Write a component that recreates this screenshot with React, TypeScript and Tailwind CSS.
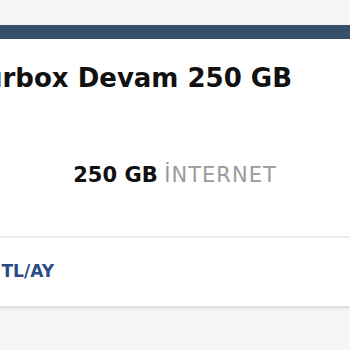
export default function App() {
  return (
    <div className="h-[350px] w-[350px] overflow-hidden bg-[#f4f5f7] pt-[25px] font-['DejaVu_Sans',sans-serif]">
      <div className="flex w-full flex-col bg-white shadow-[0_2px_3px_rgba(0,0,0,0.12)]">
        <div className="h-[14px] bg-[#36506b]" />
        <div className="flex h-[197px] flex-col">
          <div className="mt-[23px] flex w-[292px] justify-end">
            <h2 className="whitespace-nowrap text-[26px] font-bold leading-[32px] text-[#111]">
              Turbox Devam 250 GB
            </h2>
          </div>
          <p className="mt-[68px] text-center text-[21px] leading-[26px] text-[#111]">
            <span className="font-bold">250 GB</span>{" "}
            <span className="font-normal tracking-[1px] text-[#9a9a9c]">İNTERNET</span>
          </p>
        </div>
        <div className="h-[2px] bg-[#ececec]" />
        <div className="flex h-[68px] items-center">
          <div className="flex w-[54px] justify-end">
            <span className="whitespace-nowrap text-[17px] font-bold text-[#2b4a86]">
              99,9 TL/AY
            </span>
          </div>
        </div>
      </div>
    </div>
  );
}
